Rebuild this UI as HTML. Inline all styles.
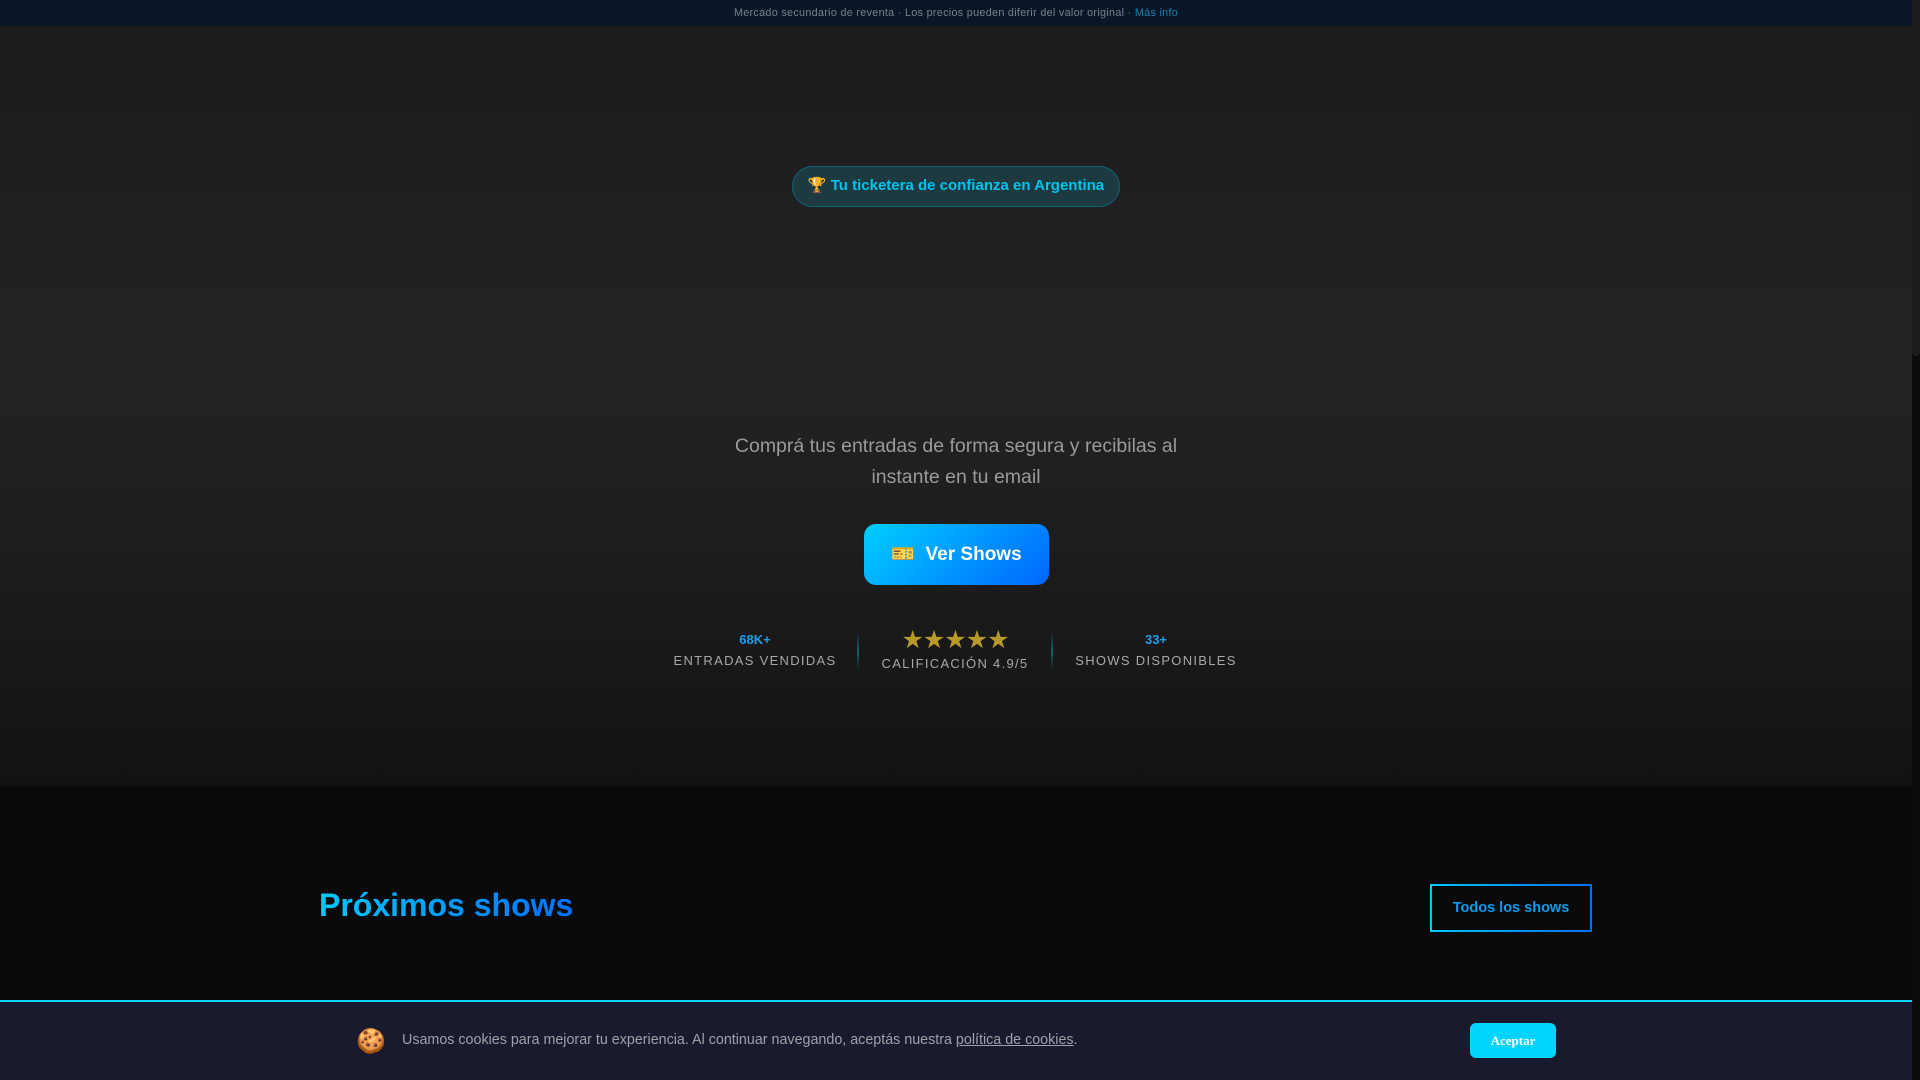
<!DOCTYPE html>
<html><head><meta charset="utf-8"><style>
*{margin:0;padding:0;box-sizing:border-box}
body{width:1920px;height:1080px;overflow:hidden;background:#0a0a0a;font-family:"Liberation Sans",sans-serif;position:relative}
.sb{position:absolute;right:0;top:0;width:8px;height:1080px;background:#0b0b0b}
.sb i{position:absolute;left:0;top:0;width:8px;height:356px;background:#1c1c1c;border-radius:0 0 4px 4px}
.top{position:absolute;left:0;top:0;width:1912px;height:26px;background:#0a1628;color:#7a7f88;font-size:10.8px;text-align:center;line-height:26px;letter-spacing:.3px}
.top span{color:#1a7fa8}
.hero{position:absolute;left:0;top:26px;width:1912px;height:760px;background:linear-gradient(180deg,#1b1b1b 0%,#202020 25%,#232323 45%,#1d1d1d 70%,#121212 100%)}
.badge{position:absolute;left:792px;top:140px;width:328px;height:41px;border:1.5px solid #0e6478;border-radius:21px;background:#1d3a40;color:#00c3ee;font-weight:bold;font-size:15px;text-align:center;line-height:38px}
.sub{position:absolute;left:0;width:1912px;text-align:center;color:#9a9a9a;font-size:19.5px;line-height:31px}
.btn{position:absolute;left:864px;width:185px;height:61px;border-radius:12px;background:linear-gradient(135deg,#00cfff,#0066ff);color:#fff;font-weight:bold;font-size:19px;text-align:center;line-height:61px}
.stat{position:absolute;text-align:center;width:200px}
.num{color:#1a9fe8;font-weight:bold;font-size:13px}
.lab{color:#a8a8a8;font-size:13px;letter-spacing:1.3px;margin-top:6px}
.div{position:absolute;width:2px;height:38px;background:linear-gradient(180deg,transparent,#0e6478,transparent)}
.stars{color:#b89a2a;font-size:25px;letter-spacing:-1px;line-height:22px}
.sec{position:absolute;left:0;top:786px;width:1912px;height:294px;background:#0a0a0a}
h2{position:absolute;left:319px;top:887px;font-size:32px;font-weight:bold;background:linear-gradient(90deg,#00c8ff,#0070ff);-webkit-background-clip:text;color:transparent}
.all{position:absolute;left:1430px;top:884px;width:162px;height:48px;border:2px solid;border-image:linear-gradient(90deg,#00c8ff,#0070ff) 1;color:#0a9aee;font-weight:bold;font-size:14.5px;text-align:center;line-height:44px}
.ck{position:absolute;left:0;top:1000px;width:1912px;height:80px;background:#1a1a2e;border-top:2px solid #00d4ff}
.ck .t{position:absolute;left:402px;top:30px;color:#a0a0a8;font-size:14.3px}
.ck .t u{color:#a0a0a8}
.ck .e{position:absolute;left:356px;top:25px;font-size:24px}
.ac{position:absolute;left:1470px;top:21px;width:86px;height:35px;background:#00d4ff;border-radius:6px;color:#fff;font-family:"Liberation Serif",serif;font-weight:bold;font-size:13px;text-align:center;line-height:35px}
</style></head><body>
<div class="hero">
<div class="badge">🏆 Tu ticketera de confianza en Argentina</div>
<div class="sub" style="top:405px">Comprá tus entradas de forma segura y recibilas al<br>instante en tu email</div>
<div class="btn" style="top:498px">🎫&nbsp; Ver Shows</div>
<div class="stat" style="left:655px;top:606px"><div class="num">68K+</div><div class="lab">ENTRADAS VENDIDAS</div></div>
<div class="div" style="left:857px;top:606px"></div>
<div class="stat" style="left:855px;top:603px"><div class="stars">★★★★★</div><div class="lab" style="margin-top:5px">CALIFICACIÓN 4.9/5</div></div>
<div class="div" style="left:1051px;top:606px"></div>
<div class="stat" style="left:1056px;top:606px"><div class="num">33+</div><div class="lab">SHOWS DISPONIBLES</div></div>
</div>
<div class="top">Mercado secundario de reventa · Los precios pueden diferir del valor original · <span>Más info</span></div>
<div class="sec"></div>
<h2>Próximos shows</h2>
<div class="all">Todos los shows</div>
<div class="ck"><div class="e">🍪</div><div class="t">Usamos cookies para mejorar tu experiencia. Al continuar navegando, aceptás nuestra <u>política de cookies</u>.</div><div class="ac">Aceptar</div></div>
<div class="sb"><i></i></div>
</body></html>
